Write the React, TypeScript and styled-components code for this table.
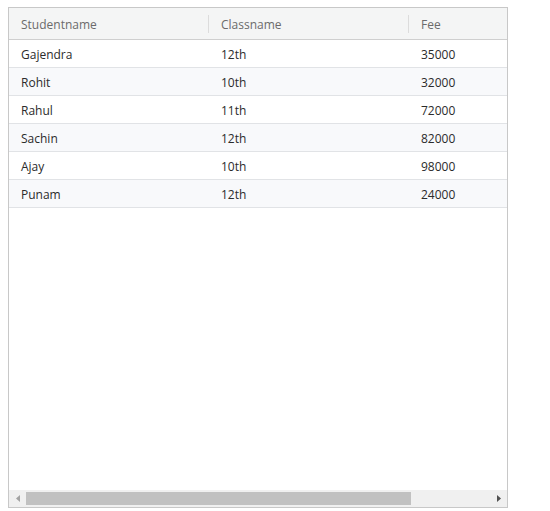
import React from "react";
import styled, { createGlobalStyle } from "styled-components";

const Global = createGlobalStyle`
  html, body { margin: 0; padding: 0; background: #fff; }
  body { padding: 7px 0 0 8px; font-family: "Open Sans", "Noto Sans", sans-serif; }
`;

const Grid = styled.div`
  width: 500px;
  height: 501px;
  box-sizing: border-box;
  border: 1px solid #c8c8c8;
  display: flex;
  flex-direction: column;
  background: #fff;
`;

const Viewport = styled.div`
  flex: 1;
  overflow: hidden;
`;

const Table = styled.div`
  width: 590px;
  display: flex;
  flex-direction: column;
`;

const HeaderRow = styled.div`
  display: grid;
  grid-template-columns: 200px 200px 190px;
  height: 31px;
  background: #f4f5f5;
  border-bottom: 1px solid #cfcfcf;
`;

const HeaderCell = styled.div<{ $sep?: boolean }>`
  position: relative;
  display: flex;
  align-items: center;
  padding: 2px 0 0 12px;
  font-size: 12px;
  color: #6b6b6b;
  &::after {
    content: "";
    display: ${(p) => (p.$sep ? "block" : "none")};
    position: absolute;
    right: 0;
    top: 7px;
    bottom: 6px;
    width: 1px;
    background: #dcdcdc;
  }
`;

const Row = styled.div<{ $alt?: boolean }>`
  display: grid;
  grid-template-columns: 200px 200px 190px;
  height: 27px;
  background: ${(p) => (p.$alt ? "#f8f9fb" : "#fff")};
  border-bottom: 1px solid #e1e3e6;
`;

const Cell = styled.div`
  display: flex;
  align-items: center;
  padding: 2px 0 0 12px;
  font-size: 12px;
  color: #2b2b2b;
`;

const ScrollBar = styled.div`
  height: 17px;
  display: flex;
  align-items: center;
  background: #f0f0f0;
`;

const ArrowBtn = styled.div`
  width: 17px;
  height: 17px;
  display: flex;
  align-items: center;
  justify-content: center;
  flex: none;
`;

const Track = styled.div`
  flex: 1;
  height: 13px;
  display: flex;
  align-items: center;
`;

const Thumb = styled.div`
  height: 13px;
  background: #c1c1c1;
`;

const data = [
  ["Gajendra", "12th", "35000"],
  ["Rohit", "10th", "32000"],
  ["Rahul", "11th", "72000"],
  ["Sachin", "12th", "82000"],
  ["Ajay", "10th", "98000"],
  ["Punam", "12th", "24000"],
];

export default function App() {
  return (
    <>
      <Global />
      <Grid>
        <Viewport>
          <Table>
            <HeaderRow>
              <HeaderCell $sep>Studentname</HeaderCell>
              <HeaderCell $sep>Classname</HeaderCell>
              <HeaderCell>Fee</HeaderCell>
            </HeaderRow>
            {data.map((r, i) => (
              <Row key={i} $alt={i % 2 === 1}>
                {r.map((c, j) => (
                  <Cell key={j}>{c}</Cell>
                ))}
              </Row>
            ))}
          </Table>
        </Viewport>
        <ScrollBar>
          <ArrowBtn>
            <svg width="4" height="7" viewBox="0 0 4 7">
              <path d="M4 0 L0 3.5 L4 7 Z" fill="#a3a3a3" />
            </svg>
          </ArrowBtn>
          <Track>
            <Thumb style={{ width: 385 }} />
          </Track>
          <ArrowBtn>
            <svg width="4" height="7" viewBox="0 0 4 7">
              <path d="M0 0 L4 3.5 L0 7 Z" fill="#505050" />
            </svg>
          </ArrowBtn>
        </ScrollBar>
      </Grid>
    </>
  );
}
